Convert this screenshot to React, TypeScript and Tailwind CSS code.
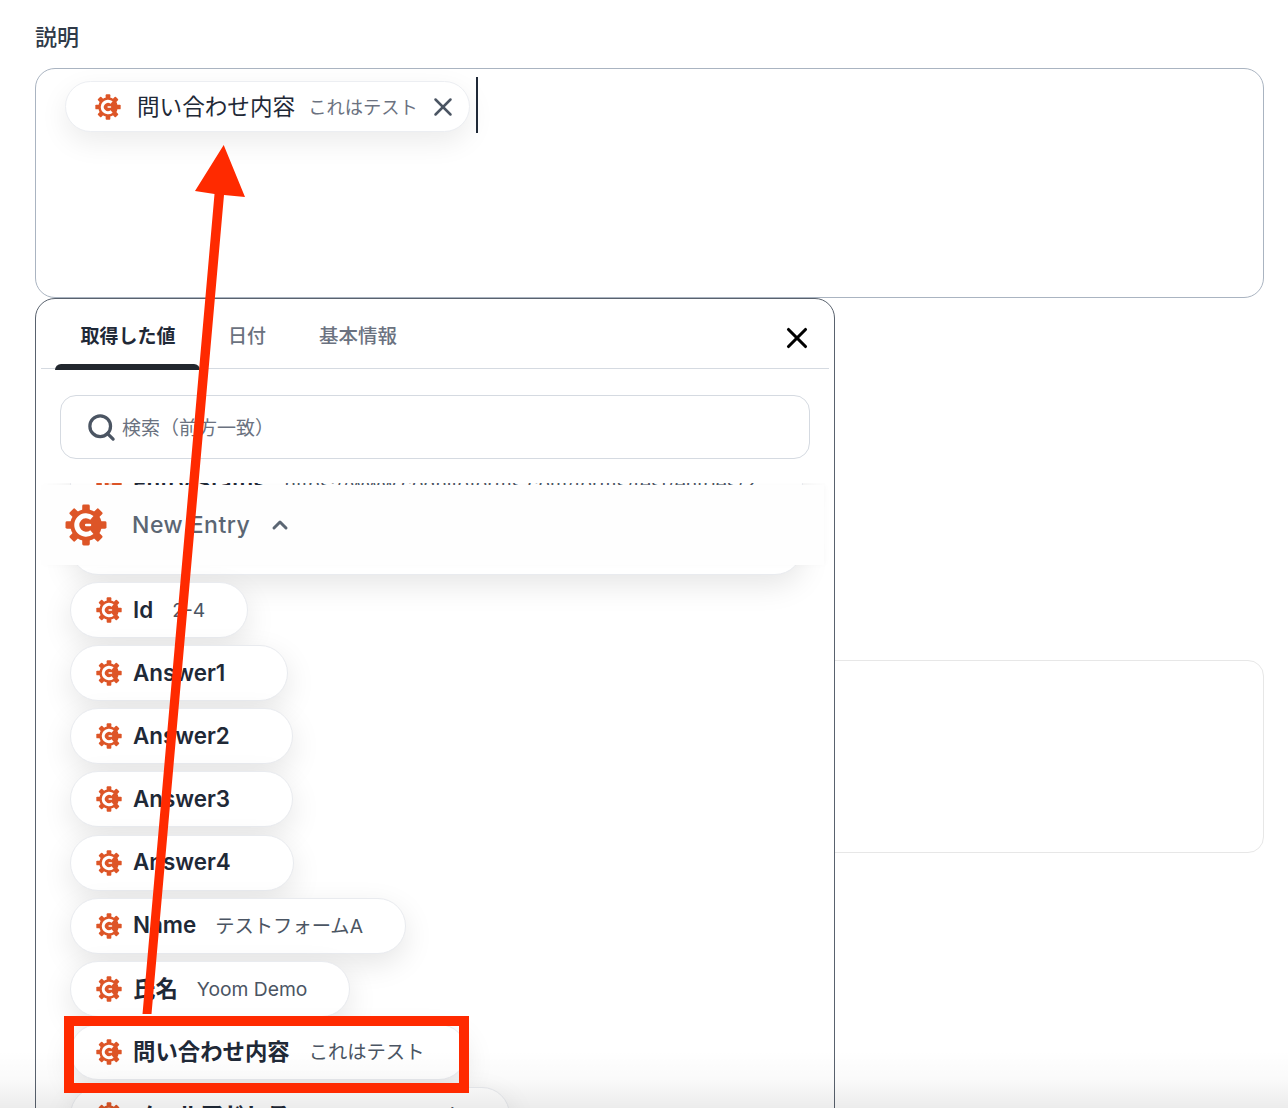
import React from "react";
import { ChevronUp, Search, X } from "lucide-react";

const FONT = "[font-family:Inter,'Noto_Sans_CJK_JP',sans-serif]";

function Gear({ className }: { className: string }) {
  const teeth = [0, 45, 90, 135, 180, 225, 270, 315];
  return (
    <svg viewBox="0 0 40 40" className={className} aria-hidden="true">
      {teeth.map((a) => (
        <rect key={a} x="16.4" y="0.5" width="7.2" height="8" rx="1.4" fill="#DD5527" transform={`rotate(${a} 20 20)`} />
      ))}
      <circle cx="20" cy="20" r="15" fill="#DD5527" />
      <path d="M25.6 13.2 A8.8 8.8 0 1 0 25.6 26.8" fill="none" stroke="#fff" strokeWidth="4.8" />
      <rect x="19" y="18.8" width="6" height="2.4" rx="1.2" fill="#fff" />
    </svg>
  );
}

type Row = { label: string; value?: string };

const rows: Row[] = [
  { label: "Entry Status", value: "https://www.cognitoforms.com/forms/test/entries/2" },
  { label: "Entry Number", value: "2024-04-18T10:15:32.000+09:00" },
  { label: "Id", value: "2-4" },
  { label: "Answer1" },
  { label: "Answer2" },
  { label: "Answer3" },
  { label: "Answer4" },
  { label: "Name", value: "テストフォームA" },
  { label: "氏名", value: "Yoom Demo" },
  { label: "問い合わせ内容", value: "これはテスト" },
  { label: "メールアドレス", value: "demo@sample.jp" },
];

function Pill({ row, wide }: { row: Row; wide?: boolean }) {
  return (
    <div
      className={`flex h-14 shrink-0 items-center rounded-full border border-[#e9ebef] bg-white pl-[25px] pr-[42px] shadow-[0_10px_30px_rgba(0,0,0,0.1)] ${
        wide ? "w-[733px] overflow-hidden" : "w-fit"
      }`}
    >
      <Gear className="h-[26px] w-[26px] shrink-0" />
      <span className="ml-[11px] mr-[20px] shrink-0 whitespace-nowrap text-[22.4px] font-semibold leading-none text-[#1f2937]">
        {row.label}
      </span>
      {row.value && <span className="-ml-[1px] whitespace-nowrap pt-[1px] text-[19.3px] leading-none text-[#4b5563]">{row.value}</span>}
    </div>
  );
}

export default function App() {
  return (
    <div className={`relative h-[1108px] w-[1288px] overflow-hidden bg-white ${FONT}`}>
      <div className="pl-[35px] pr-[24px] pt-[22px]">
        <div className="h-[46px] text-[22px] font-medium leading-[30px] text-[#2f3a48]">説明</div>
        <div className="flex h-[230px] items-start gap-[6px] rounded-[20px] border border-[#aab4c1] pl-[29px] pt-[8px]">
          <div className="mt-[4px] flex h-[51px] w-[405px] shrink-0 items-center rounded-full border border-[#eceef2] bg-white pl-[29px] shadow-[0_10px_28px_rgba(0,0,0,0.08)]">
            <Gear className="h-[26px] w-[26px] shrink-0" />
            <span className="ml-[16px] whitespace-nowrap pt-[2px] text-[22.6px] leading-none text-[#1f2937]">問い合わせ内容</span>
            <span className="ml-[13px] whitespace-nowrap pt-[2px] text-[18.3px] leading-none text-[#6b7280]">これはテスト</span>
            <X className="ml-[10px] h-[30px] w-[30px] shrink-0 text-[#4b5563]" strokeWidth={2} />
          </div>
          <div className="h-[56px] w-[2px] shrink-0 bg-[#1f2937]" />
        </div>
        <div className="mt-[362px] h-[193px] rounded-[16px] border border-[#e7e7e7]" />
      </div>

      <div className="absolute left-[35px] top-[298px] h-[900px] w-[800px] rounded-[20px] border border-[#59626e] bg-white">
        <div className="relative mx-[5px] flex h-[70px] border-b border-[#d5dae1] pl-[14px]">
          <div className="relative flex h-[70px] w-[145px] items-center justify-center pl-[1px] pt-[6px] text-[19px] font-bold text-[#1f2937]">
            取得した値
            <div className="absolute bottom-[-1px] left-0 h-[6px] w-full rounded-t-[6px] bg-[#22272e]" />
          </div>
          <div className="ml-[28px] flex h-[70px] items-center pt-[6px] text-[19px] font-medium text-[#6b7280]">日付</div>
          <div className="ml-[53px] flex h-[70px] items-center pt-[6px] text-[19.5px] font-medium text-[#6b7280]">基本情報</div>
          <X className="absolute right-[15px] top-[22px] h-[34px] w-[34px] text-black" strokeWidth={2.2} />
        </div>

        <div className="mx-[24px] mt-[26px] flex h-[64px] items-center rounded-[16px] border border-[#d5dae1] pl-[25px]">
          <Search className="h-[31px] w-[31px] shrink-0 text-[#4b5563]" strokeWidth={2.5} />
          <span className="ml-[5px] pt-[4px] text-[19px] text-[#6b7280]">検索（前方一致）</span>
        </div>

        <div className="relative mt-[24px] h-[660px] overflow-hidden">
          <div className="-mt-[27.3px] flex flex-col gap-[7.15px] pl-[34px]">
            {rows.map((r, i) => (
              <Pill key={r.label} row={r} wide={i < 2} />
            ))}
          </div>
          <div className="absolute left-[5px] right-[10px] top-[2px] flex h-[80px] items-center bg-[#fefefe] pl-[24px] shadow-[2px_0_6px_rgba(0,0,0,0.02)]">
            <Gear className="h-[42px] w-[42px] shrink-0" />
            <span className="ml-[25px] text-[23px] font-medium tracking-[0.5px] text-[#5b6673]">New Entry</span>
            <ChevronUp className="ml-[18px] h-[24px] w-[24px] text-[#5b6673]" strokeWidth={3} />
          </div>
        </div>
      </div>

      <div className="pointer-events-none absolute bottom-0 left-0 h-[58px] w-full bg-gradient-to-b from-black/0 via-black/[0.02] to-black/[0.075]" />

      <div className="absolute left-[64px] top-[1016px] h-[77px] w-[405px] border-[10px] border-[#ff2a00]" />
      <svg className="absolute left-0 top-0 h-[1108px] w-[1288px]" viewBox="0 0 1288 1108" aria-hidden="true">
        <polygon points="142.5,1014 151.5,1014 224,195 245,197 223.7,145 195,191 214.5,194" fill="#ff2a00" />
      </svg>
    </div>
  );
}
